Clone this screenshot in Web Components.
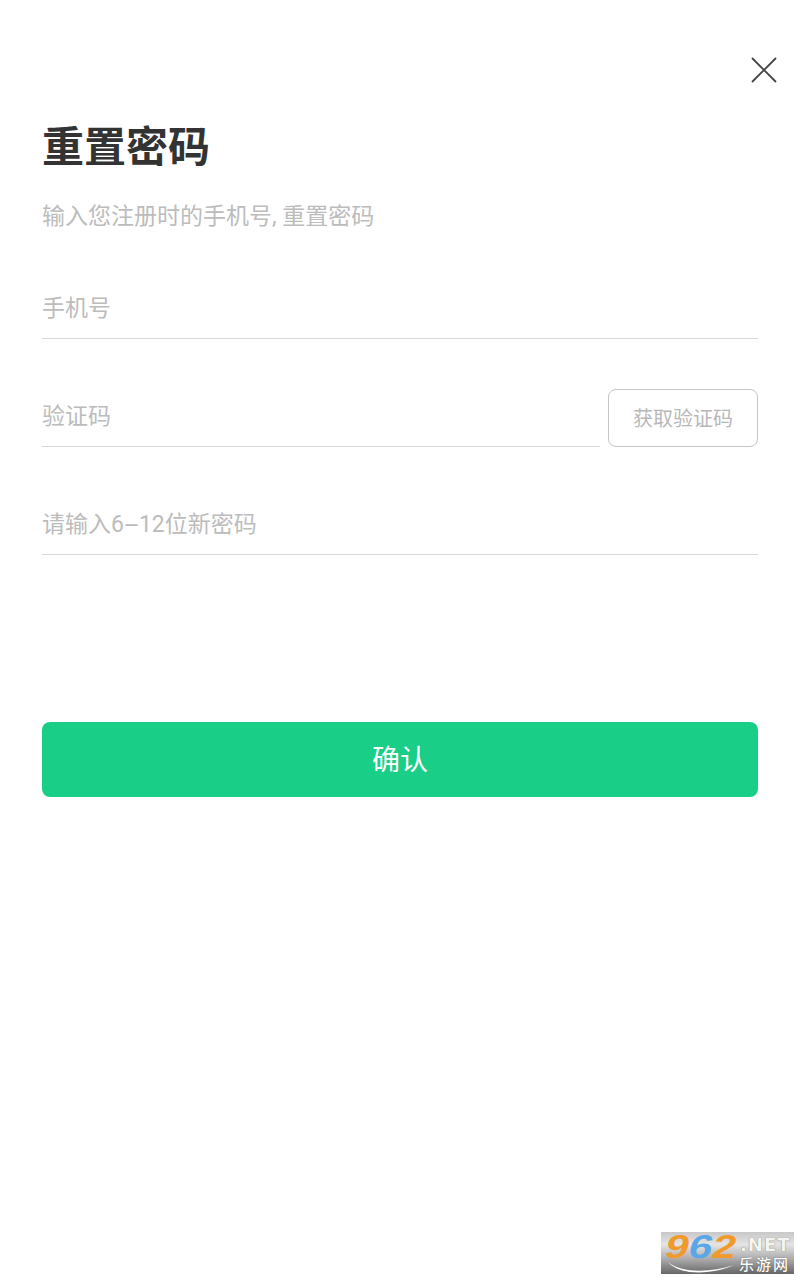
<!DOCTYPE html>
<html lang="zh">
<head>
<meta charset="utf-8">
<title>重置密码</title>
<style>
  html, body { margin: 0; background: #fff; }
  body { font-family: Roboto, "Noto Sans CJK SC", sans-serif; }
  .dash { display: inline-block; width: 15px; text-align: center; transform: scaleX(2.2); }
</style>
</head>
<body>
<reset-page>
  <close-button></close-button>
  <h-title slot="head">重置密码</h-title>
  <span slot="sub">输入您注册时的手机号, 重置密码</span>
  <text-field>手机号</text-field>
  <text-field code>验证码</text-field>
  <text-field>请输入6<span class="dash">-</span>12位新密码</text-field>
  <submit-button>确认</submit-button>
</reset-page>
<site-mark></site-mark>

<script>
class ResetPage extends HTMLElement {
  constructor() {
    super();
    this.attachShadow({ mode: 'open' });
    this.shadowRoot.innerHTML = `
      <style>
        :host { display: block; height: 1280px; box-sizing: border-box; padding: 57px 42px 0; }
        .sub { margin-top: 26px; height: 30px; line-height: 30px; font-size: 23px; color: #bcbcbc; white-space: nowrap; }
        .fields { display: flex; flex-direction: column; gap: 50px; margin-top: 49px; }
      </style>
      <slot></slot>
      <slot name="head"></slot>
      <div class="sub"><slot name="sub"></slot></div>
      <div class="fields"><slot name="field"></slot></div>
      <slot name="action"></slot>
    `;
  }
  connectedCallback() {
    this.querySelectorAll('text-field').forEach(f => f.slot = 'field');
    this.querySelector('submit-button').slot = 'action';
  }
}

class CloseButton extends HTMLElement {
  constructor() {
    super();
    this.attachShadow({ mode: 'open' });
    this.shadowRoot.innerHTML = `
      <style>
        :host { display: flex; justify-content: flex-end; height: 26px; margin-right: -19px; }
        svg { display: block; }
      </style>
      <svg width="26" height="26" viewBox="0 0 26 26" fill="none" stroke="#444" stroke-width="1.8">
        <path d="M1 1 L25 25 M25 1 L1 25"/>
      </svg>
    `;
  }
}

class HTitle extends HTMLElement {
  constructor() {
    super();
    this.attachShadow({ mode: 'open' });
    this.shadowRoot.innerHTML = `
      <style>
        :host { display: block; margin-top: 37px; height: 56px; line-height: 56px; font-size: 42px; font-weight: 700; color: #333; white-space: nowrap; }
      </style>
      <slot></slot>
    `;
  }
}

class TextField extends HTMLElement {
  constructor() {
    super();
    this.attachShadow({ mode: 'open' });
    this.shadowRoot.innerHTML = `
      <style>
        :host { display: flex; gap: 8px; align-items: flex-end; }
        .line { flex: 1; height: 58px; box-sizing: border-box; border-bottom: 1px solid #d9d9d9;
                line-height: 56px; font-size: 23px; color: #bcbcbc; white-space: nowrap; }
        button { width: 150px; height: 58px; box-sizing: border-box; padding: 0 0 2px; background: #fff;
                 border: 1px solid #c4c4c4; border-radius: 8px; font: inherit; font-size: 20px; color: #b8b8b8; }
      </style>
      <div class="line"><slot></slot></div>
      ${this.hasAttribute('code') ? '<button>获取验证码</button>' : ''}
    `;
  }
}

class SubmitButton extends HTMLElement {
  constructor() {
    super();
    this.attachShadow({ mode: 'open' });
    this.shadowRoot.innerHTML = `
      <style>
        :host { display: flex; align-items: center; justify-content: center; margin-top: 167px; height: 75px;
                padding-bottom: 3px; box-sizing: border-box;
                background: #19ce87; border-radius: 8px; color: #fff; font-size: 28px; }
      </style>
      <slot></slot>
    `;
  }
}

// watermark, sits over the page in the corner
class SiteMark extends HTMLElement {
  constructor() {
    super();
    this.attachShadow({ mode: 'open' });
    this.shadowRoot.innerHTML = `
      <style>
        :host { position: absolute; left: 661px; top: 1232px; width: 133px; height: 42px;
                background: linear-gradient(#c8c8c8, #e4e4e4 30%, #aaa 65%, #666); }
        span { position: absolute; white-space: nowrap; }
        .num { left: 5px; top: 0; font: 700 33px/30px "Liberation Sans", sans-serif; color: #f09a2c;
               transform-origin: 0 50%; transform: skewX(-14deg) scaleX(1.28); }
        .num b { color: #5ba6e6; font-weight: 700; }
        .net { left: 79px; top: 3px; font: 700 18px/20px "DejaVu Sans", sans-serif; color: #f4f4f4; text-shadow: 0 0 1px #555; letter-spacing: 1px; }
        .cn { left: 78px; top: 23px; font: 500 15px/18px "Noto Sans CJK SC", sans-serif; color: #fff; text-shadow: 0 0 1px #444; letter-spacing: 2px; }
        svg { position: absolute; left: 5px; top: 27px; }
      </style>
      <span class="num">9<b>6</b>2</span>
      <span class="net">.NET</span>
      <span class="cn">乐游网</span>
      <svg width="70" height="15" viewBox="0 0 70 15"><path d="M2 3 C14 14 44 14 68 6 C46 16 14 17 2 3Z" fill="#fff"/></svg>
    `;
  }
}

customElements.define('reset-page', ResetPage);
customElements.define('close-button', CloseButton);
customElements.define('h-title', HTitle);
customElements.define('text-field', TextField);
customElements.define('submit-button', SubmitButton);
customElements.define('site-mark', SiteMark);
</script>
</body>
</html>
